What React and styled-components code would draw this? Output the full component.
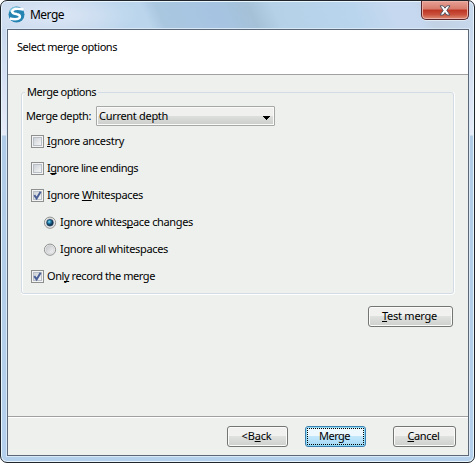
import React, { useLayoutEffect, useRef } from "react";
import styled, { createGlobalStyle } from "styled-components";

const Global = createGlobalStyle`
  * { box-sizing: border-box; }
  body { margin: 0; background: #fff; overflow: hidden; }
`;

const Window = styled.main`
  display: flex;
  flex-direction: column;
  width: 475px;
  height: 463px;
  padding: 0 5px 6px 6px;
  border: 1px solid #20242b;
  border-radius: 7px;
  box-shadow: inset 0 0 0 1px #e9f5fc;
  background:
    radial-gradient(ellipse 90px 24px at 50px 14px, #dce7f5, transparent) 0 0 / 100% 28px no-repeat,
    linear-gradient(65deg, #c8d8ee 0 12%, #bad5ec 26% 31%, #aac7e0 34%, #a6c4e2 46%, #a5c1d8 53%, #b5d1e8 58%, #b8d5ed 74%, #c5d8ef 82% 87%, #c3d2e4 90%, #c8daef) 0 0 / 100% 28px no-repeat,
    linear-gradient(#c8d8ee 28px, #e6ebf8 134px, #b0cce6 135px, #b4d0ec);
  font-family: "Noto Sans", sans-serif;
  font-size: 11px;
  line-height: 14px;
  color: #000;
`;

const TitleBar = styled.header`
  display: flex;
  align-items: flex-start;
  height: 28px;
  flex: none;
  padding-left: 1px;
`;

const Logo = styled.svg`
  width: 17px;
  height: 17px;
  margin: 5px 5px 0 0;
`;

const Title = styled.h1`
  margin: 5px 0 0;
  font-size: 12px;
  line-height: 17px;
  font-weight: 400;
`;

const Close = styled.button`
  display: flex;
  justify-content: center;
  align-items: center;
  width: 48px;
  height: 19px;
  margin: 0 0 0 auto;
  padding: 0;
  border: 1px solid #59252a;
  border-top: 0;
  border-radius: 0 0 5px 5px;
  box-shadow: inset 0 0 0 1px #eab0a5, 0 1px #e1ebf6;
  background: linear-gradient(#e6a195, #d77b6b 45%, #bd3523 50%, #c9503b 75%, #df8f78);
`;

const Content = styled.section`
  display: flex;
  flex-direction: column;
  flex: 1;
  border: 1px solid #5c6877;
  outline: 1px solid #d8e8f6;
  background: #eef0ee;
`;

const Banner = styled.div`
  height: 45px;
  flex: none;
  padding: 10px 9px;
  border-bottom: 1px solid #a0a0a0;
  background: #fff;
`;

const Body = styled.div`
  display: flex;
  flex-direction: column;
  flex: 1;
  padding: 10px 14px 0 13px;
`;

const Group = styled.fieldset`
  display: flex;
  flex-direction: column;
  height: 209px;
  min-width: 0;
  margin: 0;
  padding: 0 0 0 4px;
  border: 1px solid #d3dce6;
  border-radius: 3px;
  box-shadow: inset 1px 0 #fff, 0 1px #fff, 1px 0 #fff;
`;

const Legend = styled.legend`
  height: 14px;
  margin-left: -1px;
  padding: 0 2px;
`;

const DepthRow = styled.div`
  display: flex;
  align-items: center;
  height: 20px;
  margin: 7px 0 9px;
`;

const Select = styled.button`
  display: flex;
  align-items: center;
  justify-content: space-between;
  width: 179px;
  height: 20px;
  margin-left: 5px;
  padding: 0 4px 0 2px;
  border: 1px solid #a5a8a5;
  border-radius: 1px;
  box-shadow: inset 0 0 0 1px #fafafa;
  background: linear-gradient(#f0f1ef 0 48%, #dddfdd 50%, #cbcecb);
  font: inherit;
  color: #000;
`;

const Arrow = styled.svg`
  width: 8px;
  height: 4px;
  margin-top: 3px;
`;

const Option = styled.div`
  display: flex;
  align-items: flex-start;
  height: 13px;
  margin: 0 0 14px ${p => (p.$indent ? 18 : 5)}px;
  gap: 3px;
  line-height: 12px;
`;

const Mark = styled.svg`
  width: 13px;
  height: 13px;
  flex: none;
`;

const Actions = styled.div`
  display: flex;
  justify-content: flex-end;
  margin: 12px 1px 0 0;
`;

const Footer = styled.footer`
  display: flex;
  justify-content: flex-end;
  height: 39px;
  flex: none;
  padding: 9px 12px 0 0;
  border-top: 1px solid #a0a0a0;
  box-shadow: inset 0 1px #fff;
`;

const Button = styled.button`
  display: flex;
  align-items: center;
  justify-content: center;
  width: ${p => p.$width}px;
  height: 21px;
  margin-right: ${p => p.$gap || 0}px;
  padding: 0 2px 2px 0;
  border: 1px solid ${p => (p.$primary ? "#3c7fb1" : "#747674")};
  border-radius: 3px;
  box-shadow: inset 0 0 0 1px ${p => (p.$primary ? "#8fdcf7" : "#fafbfa")};
  background: ${p => p.$primary
    ? "linear-gradient(#edf8fe 0 47%, #c2e7fb 50%, #a3d9f6)"
    : "linear-gradient(#f1f2f0 0 47%, #dfe1df 50%, #cdd0cd)"};
  outline: ${p => (p.$primary ? "1px dotted #000" : "0")};
  outline-offset: -3px;
  font: inherit;
  color: #000;
`;

const TextBox = styled.span`
  display: block;
  width: ${p => p.$width}px;
  flex: none;
  white-space: nowrap;
`;

const Run = styled.span`
  display: inline-block;
  white-space: pre;
`;

const Key = styled.span`
  text-decoration: underline;
  text-decoration-thickness: 1px;
  text-underline-offset: 1px;
  text-decoration-skip-ink: none;
`;

// Fits a caption to its dialog width; the letter after "&" is its access key.
function Caption({ text, width }) {
  const run = useRef(null);
  useLayoutEffect(() => {
    const el = run.current;
    el.style.letterSpacing = "0px";
    const natural = el.getBoundingClientRect().width;
    el.style.letterSpacing = `${(width - natural) / text.replace("&", "").length}px`;
  }, [text, width]);
  const at = text.indexOf("&");
  return (
    <TextBox $width={width}>
      <Run ref={run}>
        {at < 0 ? text : <>{text.slice(0, at)}<Key>{text[at + 1]}</Key>{text.slice(at + 2)}</>}
      </Run>
    </TextBox>
  );
}

function CheckMark({ checked }) {
  return (
    <Mark viewBox="0 0 13 13">
      <defs>
        <linearGradient id="box" x1="0" y1="0" x2="1" y2="1">
          <stop stopColor="#cbd0d5" /><stop offset="1" stopColor="#f7f7f7" />
        </linearGradient>
      </defs>
      <rect x=".5" y=".5" width="12" height="12" fill="#f4f4f4" stroke="#8e8f8f" />
      <rect x="2.5" y="2.5" width="8" height="8" fill="url(#box)" stroke="#b9bfc6" />
      {checked && <path d="M3.3 6.2 5.6 9.4 9.6 2.8" fill="none" stroke="#4a5f97" strokeWidth="2" />}
    </Mark>
  );
}

function RadioMark({ checked }) {
  return (
    <Mark viewBox="0 0 13 13">
      <defs>
        <linearGradient id="ring" x1="0" y1="0" x2="1" y2="1">
          <stop stopColor="#c3c7ca" /><stop offset="1" stopColor="#f5f5f5" />
        </linearGradient>
        <radialGradient id="dot" cx=".38" cy=".35">
          <stop stopColor="#9ce4fa" /><stop offset=".45" stopColor="#2388b5" /><stop offset="1" stopColor="#103654" />
        </radialGradient>
      </defs>
      <circle cx="6" cy="6.7" r="5.6" fill="#f4f4f4" stroke="#8e8f8f" />
      <circle cx="6" cy="6.7" r="4.1" fill="url(#ring)" stroke="#c2c5c7" strokeWidth=".6" />
      {checked && <circle cx="6" cy="6.7" r="3.3" fill="url(#dot)" stroke="#183a59" strokeWidth=".7" />}
    </Mark>
  );
}

const options = [
  { text: "&Ignore ancestry", width: 77 },
  { text: "I&gnore line endings", width: 91 },
  { text: "Ignore &Whitespaces", width: 96, checked: true },
  { text: "Ignore whites&pace changes", width: 133, radio: true, checked: true },
  { text: "Ignore all whitespaces", width: 108, radio: true },
  { text: "Onl&y record the merge", width: 108, checked: true },
];

export default function App() {
  return (
    <>
      <Global />
      <Window>
        <TitleBar>
          <Logo viewBox="0 0 17 17">
            <circle cx="8.5" cy="8.5" r="8" fill="#2584b1" />
            <path d="M1 5Q4 0 10 1 6 2 5 5Q3 7 1 5" fill="#83c8df" />
            <path d="M15.5 3.5Q7 1.5 4.8 4.3C3 7 6 7.5 9 8.2C13 9 12.7 12.5 9 13Q6 13.4 1.8 12.6" fill="none" stroke="#fff" strokeWidth="2.5" />
          </Logo>
          <Title><Caption text="Merge" width={34} /></Title>
          <Close aria-label="Close">
            <svg width="12" height="11" viewBox="0 0 12 11">
              <path d="M1 .8h3.2L6 3.2 7.8.8H11L7.8 5.4 11 10H7.8L6 7.6 4.2 10H1l3.2-4.6Z" fill="#fff" stroke="#555762" />
            </svg>
          </Close>
        </TitleBar>
        <Content>
          <Banner><Caption text="Select merge options" width={100} /></Banner>
          <Body>
            <Group>
              <Legend><Caption text="Merge options" width={69} /></Legend>
              <DepthRow>
                <Caption text="Merge depth:" width={65} />
                <Select>
                  <Caption text="Current depth" width={69} />
                  <Arrow viewBox="0 0 8 4" shapeRendering="crispEdges"><path d="M0 0h8L4 4Z" /></Arrow>
                </Select>
              </DepthRow>
              {options.map(o => (
                <Option key={o.text} $indent={o.radio}>
                  {o.radio ? <RadioMark checked={o.checked} /> : <CheckMark checked={o.checked} />}
                  <Caption text={o.text} width={o.width} />
                </Option>
              ))}
            </Group>
            <Actions><Button $width={85}><Caption text="&Test merge" width={55} /></Button></Actions>
          </Body>
          <Footer>
            <Button $width={61} $gap={17}><Caption text="<B&ack" width={30} /></Button>
            <Button $width={61} $gap={27} $primary><Caption text="Merge" width={31} /></Button>
            <Button $width={63}><Caption text="&Cancel" width={32} /></Button>
          </Footer>
        </Content>
      </Window>
    </>
  );
}
